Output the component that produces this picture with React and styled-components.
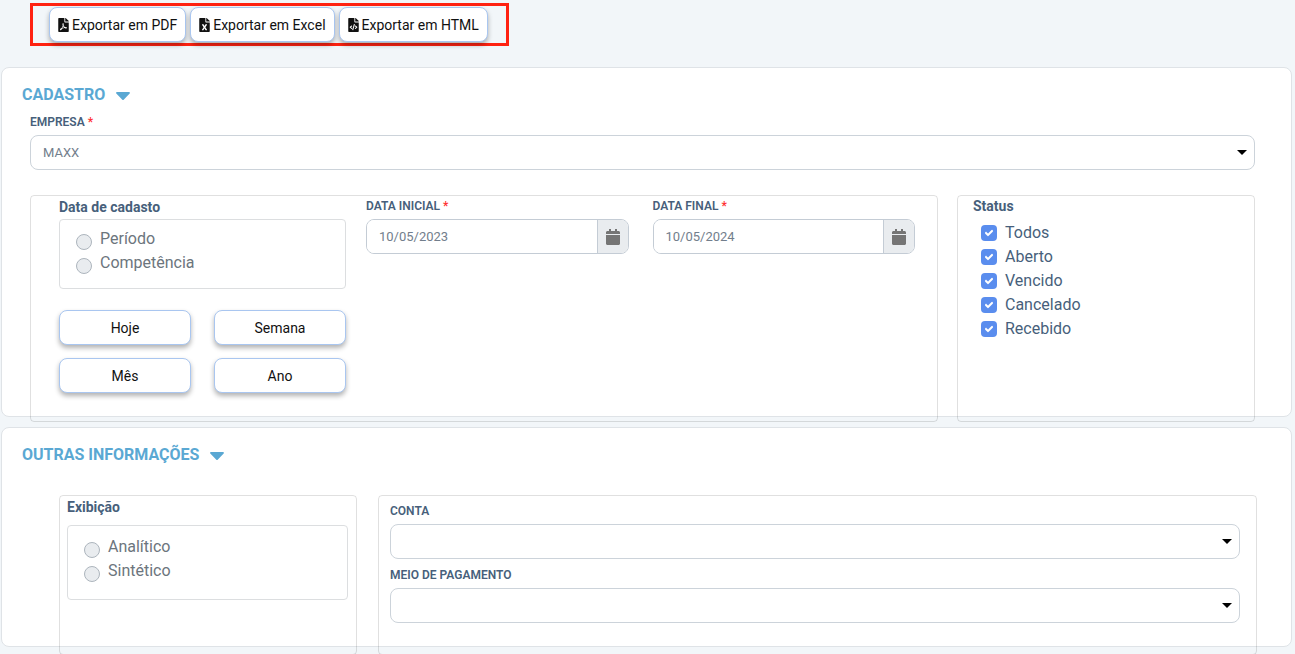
import React from 'react'
import styled, { createGlobalStyle } from 'styled-components'
import {
    FaCalendar,
    FaCaretDown,
    FaCheck,
    FaFileCode,
    FaFileExcel,
    FaFilePdf,
} from 'react-icons/fa'

const exportOptions = [
    { label: 'Exportar em PDF', Icon: FaFilePdf },
    { label: 'Exportar em Excel', Icon: FaFileExcel },
    { label: 'Exportar em HTML', Icon: FaFileCode },
]

const periods = ['Hoje', 'Semana', 'Mês', 'Ano']

const statusList = ['Todos', 'Aberto', 'Vencido', 'Cancelado', 'Recebido']

function SelectField({ id, label, required, options = [] }) {
    return (
        <div>
            <Label htmlFor={id}>
                {label} {required && <Required>*</Required>}
            </Label>
            <SelectBox>
                <Select id={id}>
                    {options.map((option) => (
                        <option key={option}>{option}</option>
                    ))}
                </Select>
                <svg viewBox="0 0 10 5" aria-hidden="true">
                    <path d="M0 0h10L5 5z" fill="currentColor" />
                </svg>
            </SelectBox>
        </div>
    )
}

function DateField({ id, label, value }) {
    return (
        <div>
            <Label htmlFor={id}>
                {label} <Required>*</Required>
            </Label>
            <DateBox>
                <DateInput id={id} type="text" defaultValue={value} />
                <DateButton type="button" aria-label={`Abrir calendário: ${label}`}>
                    <FaCalendar />
                </DateButton>
            </DateBox>
        </div>
    )
}

function RadioGroup({ name, options, roomy }) {
    return (
        <RadioBox $roomy={roomy}>
            {options.map((option) => (
                <RadioLabel key={option}>
                    <Radio type="radio" name={name} disabled />
                    {option}
                </RadioLabel>
            ))}
        </RadioBox>
    )
}

export default function App() {

    return (
        <Page>
            <GlobalStyle />

            <Toolbar>
                {exportOptions.map(({ label, Icon }) => (
                    <ExportButton type="button" key={label}>
                        <Icon />
                        {label}
                    </ExportButton>
                ))}
            </Toolbar>

            <Card>
                <Title>
                    CADASTRO
                    <FaCaretDown />
                </Title>
                <CadastroBody>
                    <SelectField id="empresa" label="EMPRESA" required options={['MAXX']} />
                    <CadastroRow>
                        <DatePanel>
                            <div role="group" aria-labelledby="data-cadastro">
                                <PanelTitle id="data-cadastro">Data de cadasto</PanelTitle>
                                <RadioGroup name="data" options={['Período', 'Competência']} />
                                <PeriodGrid>
                                    {periods.map((period) => (
                                        <Button type="button" key={period}>{period}</Button>
                                    ))}
                                </PeriodGrid>
                            </div>
                            <Dates>
                                <DateField id="data-inicial" label="DATA INICIAL" value="10/05/2023" />
                                <DateField id="data-final" label="DATA FINAL" value="10/05/2024" />
                            </Dates>
                        </DatePanel>
                        <StatusPanel role="group" aria-labelledby="status">
                            <PanelTitle id="status">Status</PanelTitle>
                            <StatusList>
                                {statusList.map((status) => (
                                    <CheckLabel key={status}>
                                        <CheckBox>
                                            <Check type="checkbox" defaultChecked />
                                            <FaCheck />
                                        </CheckBox>
                                        {status}
                                    </CheckLabel>
                                ))}
                            </StatusList>
                        </StatusPanel>
                    </CadastroRow>
                </CadastroBody>
            </Card>

            <Card>
                <Title>
                    OUTRAS INFORMAÇÕES
                    <FaCaretDown />
                </Title>
                <OutrasRow>
                    <ExibicaoPanel role="group" aria-labelledby="exibicao">
                        <PanelTitle id="exibicao">Exibição</PanelTitle>
                        <RadioGroup name="exibicao" options={['Analítico', 'Sintético']} roomy />
                    </ExibicaoPanel>
                    <ContaPanel>
                        <SelectField id="conta" label="CONTA" />
                        <SelectField id="pagamento" label="MEIO DE PAGAMENTO" />
                    </ContaPanel>
                </OutrasRow>
            </Card>
        </Page>
    )
}

const GlobalStyle = createGlobalStyle`
    * {
        box-sizing: border-box;
    }

    html {
        scrollbar-width: none;
    }

    body {
        margin: 0;
        background-color: #f2f6f9;
        color: #475f7b;
        font-family: Roboto, "Liberation Sans", sans-serif;
    }

    button, input, select {
        font-family: inherit;
        margin: 0;
    }
`

const Page = styled.main`
    display: flex;
    flex-direction: column;
    gap: 10px;
    padding: 3px 3px 8px 1px;
`

const Toolbar = styled.div`
    display: flex;
    align-self: flex-start;
    gap: 4px;
    height: 43px;
    margin: 0 0 11px 29px;
    padding: 1px 18px 0 16px;
    border: 3px solid #ff2211;
`

const Button = styled.button`
    height: 35px;
    padding: 0 8px;
    border: 1px solid #a9c6f0;
    border-radius: 8px;
    background-color: #fff;
    box-shadow: 0 3px 5px 0 rgba(0, 0, 0, 0.3);
    color: #111;
    font-size: 14px;
    line-height: 20px;
`

const ExportButton = styled(Button)`
    display: flex;
    align-items: center;
    gap: 3px;

    svg {
        width: 11px;
        height: 14px;
    }
`

const Card = styled.section`
    border: 1px solid #dfe3e7;
    border-radius: 8px;
    background-color: #fff;
`

const Title = styled.h2`
    display: flex;
    align-items: center;
    gap: 6px;
    margin: 0;
    padding: 15px 20px 0;
    color: #5aa8d3;
    font-size: 16px;
    font-weight: 700;
    line-height: 24px;

    svg {
        width: 24px;
        height: 24px;
    }
`

const CadastroBody = styled.div`
    padding: 6px 36px 0 28px;
`

/* the panels run a little past the bottom edge of their card */
const CadastroRow = styled.div`
    display: grid;
    grid-template-columns: 908fr 298fr;
    gap: 19px;
    margin: 25px 0 -6px;
`

const OutrasRow = styled.div`
    display: grid;
    grid-template-columns: 298fr 879fr;
    gap: 21px;
    margin: 28px 34px -9px 57px;
`

const Panel = styled.div`
    border: 1px solid rgba(0, 0, 0, 0.12);
    border-radius: 4px;
`

const DatePanel = styled(Panel)`
    display: grid;
    grid-template-columns: 287fr 549fr;
    gap: 20px;
    min-height: 227px;
    padding: 1px 22px 0 28px;
`

const StatusPanel = styled(Panel)`
    padding: 0 15px;
`

const ExibicaoPanel = styled(Panel)`
    min-height: 160px;
    padding: 1px 8px 0 7px;
`

const ContaPanel = styled(Panel)`
    display: flex;
    flex-direction: column;
    gap: 7px;
    padding: 6px 16px 0 11px;
`

const PanelTitle = styled.h3`
    margin: 0;
    font-size: 14px;
    font-weight: 700;
    line-height: 20px;
`

const Dates = styled.div`
    display: grid;
    grid-template-columns: 1fr 1fr;
    align-items: start;
    gap: 24px;
`

const Label = styled.label`
    display: block;
    margin-bottom: 4px;
    font-size: 12px;
    font-weight: 600;
    line-height: 18px;
`

const Required = styled.span`
    color: #ff3333;
`

const SelectBox = styled.div`
    display: grid;
    align-items: center;

    > * {
        grid-area: 1 / 1;
    }

    svg {
        width: 10px;
        height: 5px;
        justify-self: end;
        margin-right: 8px;
        color: #000;
        pointer-events: none;
    }
`

const Select = styled.select`
    appearance: none;
    width: 100%;
    height: 35px;
    padding: 0 32px 0 12px;
    border: 1px solid #ccd3da;
    border-radius: 8px;
    background-color: #fff;
    color: #727e8c;
    font-size: 13px;
`

const DateBox = styled.div`
    display: flex;
    height: 35px;
    overflow: hidden;
    border: 1px solid #c4ccd5;
    border-radius: 8px;
`

const DateInput = styled.input`
    flex: 1;
    min-width: 0;
    padding: 0 12px;
    border: 0;
    background-color: #fff;
    color: #727e8c;
    font-size: 13px;
`

const DateButton = styled.button`
    display: flex;
    align-items: center;
    justify-content: center;
    width: 31px;
    padding: 0;
    border: 0;
    border-left: 1px solid #c4ccd5;
    background-color: #e9ecef;
    color: #757575;
    font-size: 16px;
`

const RadioBox = styled.div`
    min-height: ${(props) => (props.$roomy ? 75 : 70)}px;
    margin-top: ${(props) => (props.$roomy ? 8 : 2)}px;
    padding: ${(props) => (props.$roomy ? 9 : 7)}px 16px;
    border: 1px solid #dcdee0;
    border-radius: 4px;
`

const RadioLabel = styled.label`
    display: flex;
    align-items: flex-start;
    gap: 8px;
    color: #6c757d;
    font-size: 16px;
    line-height: 24px;
`

const Radio = styled.input`
    appearance: none;
    width: 16px;
    height: 16px;

    && {
        margin-top: 7px;
    }

    border: 1px solid #adb5bd;
    border-radius: 50%;
    background-color: #e9ecef;
`

const PeriodGrid = styled.div`
    display: grid;
    grid-template-columns: 1fr 1fr;
    gap: 13px 23px;
    margin-top: 21px;
`

const StatusList = styled.div`
    margin: 5px 8px 0;
`

const CheckLabel = styled.label`
    display: flex;
    align-items: center;
    gap: 8px;
    font-size: 16px;
    line-height: 24px;
`

const CheckBox = styled.span`
    display: grid;
    place-items: center;

    > * {
        grid-area: 1 / 1;
    }

    svg {
        width: 8px;
        height: 8px;
        color: #fff;
        stroke-width: 50;
        pointer-events: none;
    }
`

const Check = styled.input`
    appearance: none;
    width: 16px;
    height: 16px;
    border-radius: 4px;
    background-color: #5a8dee;
`
